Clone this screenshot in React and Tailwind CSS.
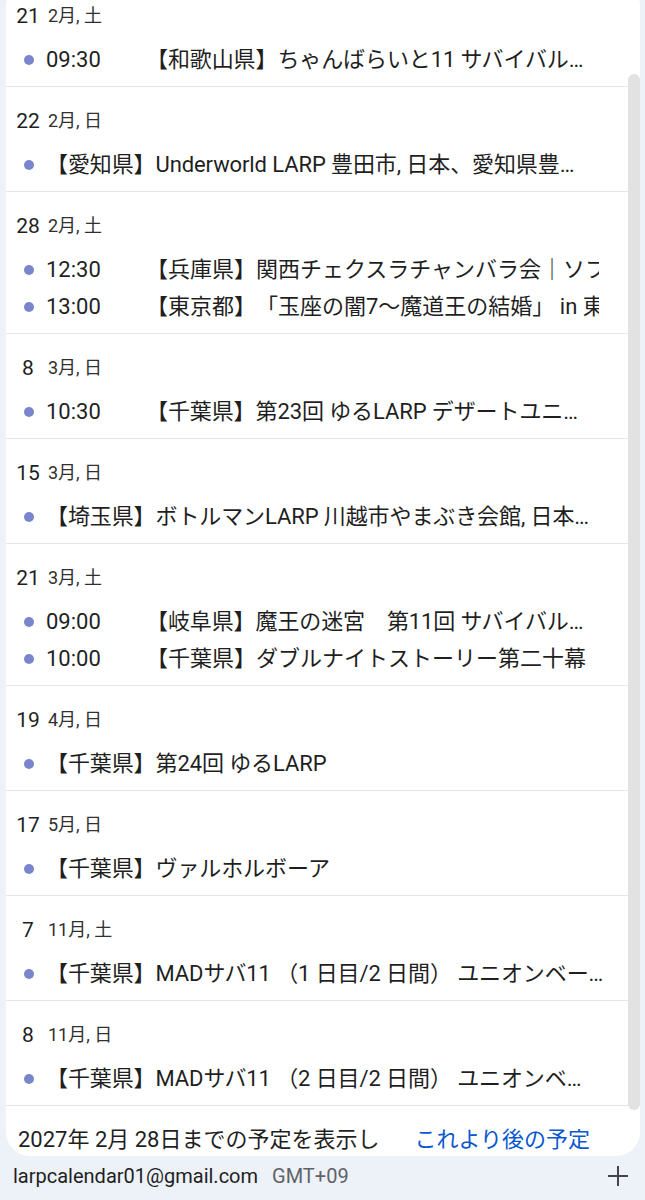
import React from "react";

const days = [
  { d: "21", m: "2月, 土", ev: [{ t: "09:30", title: "【和歌山県】ちゃんばらいと11 サバイバル…" }] },
  { d: "22", m: "2月, 日", ev: [{ title: "【愛知県】Underworld LARP 豊田市, 日本、愛知県豊…" }] },
  {
    d: "28",
    m: "2月, 土",
    ev: [
      { t: "12:30", title: "【兵庫県】関西チェクスラチャンバラ会｜ソフトコンバット", clip: true },
      { t: "13:00", title: "【東京都】「玉座の闇7〜魔道王の結婚」 in 東京", clip: true },
    ],
  },
  { d: "8", m: "3月, 日", ev: [{ t: "10:30", title: "【千葉県】第23回 ゆるLARP デザートユニ…" }] },
  { d: "15", m: "3月, 日", ev: [{ title: "【埼玉県】ボトルマンLARP 川越市やまぶき会館, 日本…" }] },
  {
    d: "21",
    m: "3月, 土",
    ev: [
      { t: "09:00", title: "【岐阜県】魔王の迷宮　第11回 サバイバル…" },
      { t: "10:00", title: "【千葉県】ダブルナイトストーリー第二十幕", clip: true },
    ],
  },
  { d: "19", m: "4月, 日", ev: [{ title: "【千葉県】第24回 ゆるLARP" }] },
  { d: "17", m: "5月, 日", ev: [{ title: "【千葉県】ヴァルホルボーア" }] },
  { d: "7", m: "11月, 土", ev: [{ title: "【千葉県】MADサバ11 （1 日目/2 日間） ユニオンベー…" }] },
  { d: "8", m: "11月, 日", ev: [{ title: "【千葉県】MADサバ11 （2 日目/2 日間） ユニオンベ…" }] },
];

function Event({ e }) {
  return (
    <div className="flex h-[37px] items-center pl-[18px] pr-[29px]">
      <span className="h-[10px] w-[10px] shrink-0 rounded-full bg-[#7986cb]" />
      <div className="ml-[12px] flex min-w-0 flex-1 items-center">
        {e.t && <span className="w-[100px] shrink-0">{e.t}</span>}
        <span
          className={
            e.clip
              ? "min-w-0 flex-1 overflow-hidden whitespace-nowrap"
              : "min-w-0 flex-1 whitespace-nowrap tracking-[-0.1px]"
          }
        >
          {e.title}
        </span>
      </div>
    </div>
  );
}

export default function App() {
  return (
    <div className="min-h-[1200px] overflow-hidden bg-[#edf1f8] font-[Roboto,'Noto_Sans_CJK_JP',sans-serif] text-[#1f1f1f] [text-spacing-trim:space-all]">
      <div className="-mt-[18px] ml-[6px] mr-[5px] flex overflow-hidden rounded-[24px] bg-white">
        <div className="min-w-0 flex-1">
          {days.map((day, i) => (
            <div key={i} className="border-b border-[#e3e7ed] pt-[22px] pb-[8px]">
              <div className="flex h-[24px] items-center pl-[9px]">
                <span className="w-[26px] text-center text-[21px] leading-none">{day.d}</span>
                <span className="ml-[7px] text-[18px] leading-none text-[#303030]">{day.m}</span>
              </div>
              <div className="mt-[13px] text-[22px] leading-[30px]">
                {day.ev.map((e, j) => (
                  <Event key={j} e={e} />
                ))}
              </div>
            </div>
          ))}
          <div className="flex h-[50px] items-end pb-[4px] pl-[12px] pr-[38px] text-[22px] leading-[24px]">
            <span>2027年 2月 28日までの予定を表示し</span>
            <span className="ml-auto text-[#0b57d0]">これより後の予定</span>
          </div>
        </div>
        <div className="w-[12px] shrink-0 pt-[92px]">
          <div className="h-[1036px] w-[12px] rounded-full bg-[#e2e2e2]" />
        </div>
      </div>
      <div className="flex h-[40px] items-center pl-[13px] pr-[16px]">
        <span className="text-[20px]">larpcalendar01@gmail.com</span>
        <span className="ml-[14px] text-[20px] text-[#5f6368]">GMT+09</span>
        <svg className="ml-auto" width="22" height="22" viewBox="0 0 22 22" fill="none" stroke="#444746" strokeWidth="2">
          <path d="M11 1v20M1 11h20" />
        </svg>
      </div>
    </div>
  );
}
